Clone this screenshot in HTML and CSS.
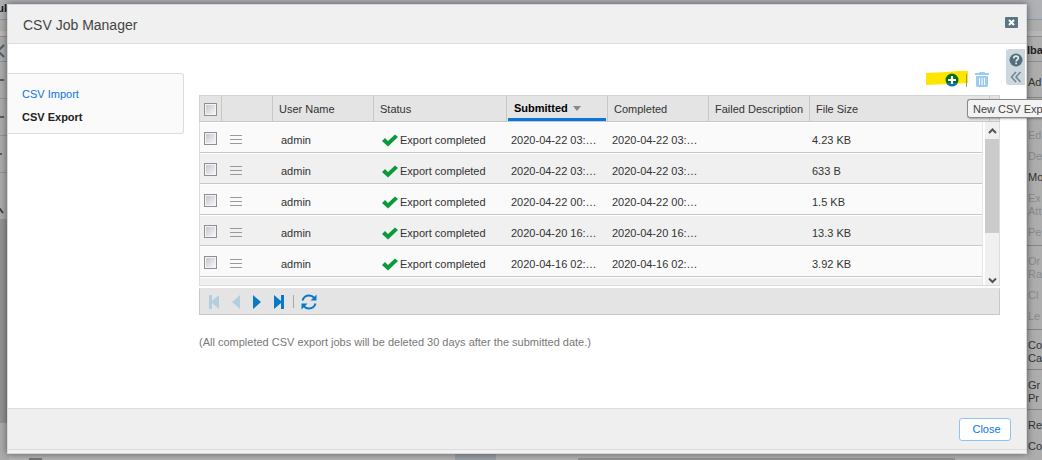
FILE: index.html
```html
<!DOCTYPE html>
<html lang="en">
<head>
<meta charset="utf-8">
<title>CSV Job Manager</title>
<link rel="stylesheet" href="styles.css">
</head>
<body>
<div class="page">
  <div class="rail">
    <div class="rail-top"><b>ul</b></div>
    <div class="rail-band"></div>
    <div class="rail-head"><svg width="8" height="14" viewBox="0 0 8 14"><path d="M4 1L-2 7l6 6" class="rail-stroke"/></svg></div>
    <div class="rail-row"><i></i></div>
    <div class="rail-row"><i></i></div>
    <div class="rail-row short"><i></i></div>
    <div class="rail-end"><svg width="8" height="6" viewBox="0 0 8 6"><path d="M-2 5L0 1l3 4" class="rail-arrow"/></svg></div>
    <div class="rail-thumb"></div>
  </div>
  <div class="under"><span class="under-box"></span><span class="under-tab"></span><span class="under-bar"></span></div>
  <div class="tools">
    <div class="tools-top"></div>
    <div class="tools-band"></div>
    <div class="tools-title">lba</div>
    <div class="tools-add">Ad</div>
    <div class="group first"><span class="off">Ed</span><span class="off">De</span><span>Mo</span><span class="off">Ex<br>Att</span><span class="off">Pe</span></div>
    <div class="group roomy"><span class="off">Or<br>Ra</span><span class="off">Cl</span><span class="off">Le</span></div>
    <div class="group"><span>Co<br>Ca</span></div>
    <div class="group"><span>Gr<br>Pr</span></div>
    <div class="group"><span>Re</span><span>Co</span></div>
  </div>
</div>

<section class="dialog" role="dialog" aria-labelledby="dialog-title">
  <header class="dialog-head">
    <h1 id="dialog-title">CSV Job Manager</h1>
    <button class="icon-button" type="button" aria-label="Close window">
      <svg width="13" height="11" viewBox="0 0 13 11"><rect width="13" height="11" rx="1" fill="#5b7583"/><path d="M4 3l5 5M9 3L4 8" stroke="#fff" stroke-width="2"/></svg>
    </button>
  </header>

  <div class="dialog-body">
    <nav class="side">
      <a href="#import">CSV Import</a>
      <a href="#export" class="current" aria-current="page">CSV Export</a>
    </nav>
    <main class="main">
      <div class="toolbar">
        <button class="icon-button" type="button" aria-label="New CSV Export">
          <svg width="42" height="18" viewBox="0 0 42 18"><path d="M0 3L20 2 32 1h10v12L25 14l-25 1z" fill="#ffe600"/><circle cx="26" cy="10" r="6.5" fill="#087018"/><path d="M20.500 13a6.500 6.500 0 0 0 11 0z" fill="#0b6fdc"/><path d="M26 6v8M22 10h8" stroke="#fff" stroke-width="2.200"/><path d="M40.500 4v13" stroke="#a49b50"/></svg>
        </button>
        <button class="icon-button" type="button" aria-label="Delete">
          <svg width="14" height="18" viewBox="0 0 14 18"><path d="M4.500 3V2.500h5V3" fill="none" stroke="#9ccbf3"/><path d="M0 3h14v2H0zM1 6h12v10l-1 1H2l-1-1z" fill="#9ccbf3"/><path d="M4.500 8v7M7 8v7M9.500 8v7" stroke="#fff"/></svg>
        </button>
      </div>

      <div class="grid">
        <table class="jobs jobs-head">
          <colgroup><col class="c-check"><col class="c-menu"><col class="c-std"><col class="c-status"><col class="c-std"><col class="c-std"><col class="c-std"><col><col class="c-end"></colgroup>
          <thead><tr>
            <th class="pick"><input type="checkbox" aria-label="Select all"></th><th></th><th>User Name</th><th>Status</th>
            <th class="sorted" aria-sort="descending"><div>Submitted<svg width="8" height="5" viewBox="0 0 8 5"><path d="M0 0h8L4 5z" fill="#888"/></svg></div></th>
            <th>Completed</th><th>Failed Description</th><th>File Size</th><th></th>
          </tr></thead>
        </table>
        <div class="scroller">
          <div class="rows">
            <table class="jobs jobs-body">
              <colgroup><col class="c-check"><col class="c-menu"><col class="c-std"><col class="c-status"><col class="c-std"><col class="c-std"><col class="c-std"><col></colgroup>
              <tbody id="jobs"></tbody>
            </table>
          </div>
          <div class="scrollbar">
            <svg width="14" height="17" viewBox="0 0 14 17"><path d="M4 11l3.500-3.500L11 11" class="arrow"/></svg>
            <div class="thumb"></div>
            <svg width="14" height="9" viewBox="0 0 14 9"><path d="M4 2.500L7.500 6 11 2.500" class="arrow"/></svg>
          </div>
        </div>
      </div>

      <div class="pager">
        <button class="icon-button" type="button" aria-label="First page" disabled><svg width="12" height="14" viewBox="0 0 12 14"><path d="M1 0h3v6l7-6v14L4 8v6H1z" fill="#b3cfdf"/></svg></button>
        <button class="icon-button" type="button" aria-label="Previous page" disabled><svg width="10" height="14" viewBox="0 0 10 14"><path d="M9 0v14L1 7z" fill="#b3cfdf"/></svg></button>
        <button class="icon-button" type="button" aria-label="Next page"><svg width="10" height="14" viewBox="0 0 10 14"><path d="M1 0l8 7-8 7z" fill="#0878c8"/></svg></button>
        <button class="icon-button" type="button" aria-label="Last page"><svg width="12" height="14" viewBox="0 0 12 14"><path d="M1 0l7 6V0h3v14H8V8l-7 6z" fill="#0878c8"/></svg></button>
        <span class="pager-line"></span>
        <button class="icon-button" type="button" aria-label="Refresh"><svg width="16" height="16" viewBox="0 0 16 16"><path d="M1.500 6.500C2.500 3.200 5 1.500 8 1.500c2.300 0 4 .9 5.500 2.700M14.500 9.500c-1 3.300-3.500 5-6.500 5-2.300 0-4-.9-5.500-2.700" fill="none" stroke="#0878c8" stroke-width="2"/><path d="M15.500.5v6h-6zM.5 15.500v-6h6z" fill="#0878c8"/></svg></button>
      </div>
      <p class="note">(All completed CSV export jobs will be deleted 30 days after the submitted date.)</p>
    </main>
  </div>

  <footer class="dialog-foot"><button class="close" type="button">Close</button></footer>

  <div class="help">
    <button class="icon-button" type="button" aria-label="Help"><svg width="14" height="14" viewBox="0 0 14 14"><circle cx="7" cy="7" r="6.500" fill="#536f7e"/><path d="M4.800 5.500C4.800 4 5.800 3.200 7 3.200s2.300.8 2.300 2c0 1.500-2.200 1.600-2.200 3.300M7.100 9.500v1.800" fill="none" stroke="#e3eaee" stroke-width="1.700"/></svg></button>
    <button class="icon-button" type="button" aria-label="Expand help"><svg width="12" height="12" viewBox="0 0 12 12"><path d="M6 1L1.500 6 6 11M10.500 1L6 6l4.500 5" fill="none" stroke="#6d8592" stroke-width="1.500"/></svg></button>
  </div>
</section>
<div class="tooltip" role="tooltip">New CSV Exp</div>
<script src="jobs.js"></script>
</body>
</html>
```
FILE: jobs.js
```js
const jobs = [
  ["2020-04-22 03:…", "2020-04-22 03:…", "4.23 KB"],
  ["2020-04-22 03:…", "2020-04-22 03:…", "633 B"],
  ["2020-04-22 00:…", "2020-04-22 00:…", "1.5 KB"],
  ["2020-04-20 16:…", "2020-04-20 16:…", "13.3 KB"],
  ["2020-04-16 02:…", "2020-04-16 02:…", "3.92 KB"]
];
const tick = '<svg width="16" height="14" viewBox="0 0 16 14"><path d="M0 7l3-3 3 3 7-6.500L16 3 6 12.500z" fill="#0a9a3c"/></svg>';
const menu = '<button class="icon-button" type="button" aria-label="Row menu"><svg width="12" height="10" viewBox="0 0 12 10"><path d="M0 .5h12M0 4.500h12M0 8.500h12" stroke="#999"/></svg></button>';
document.getElementById("jobs").innerHTML = jobs.map(([submitted, completed, size]) =>
  `<tr><td class="pick"><input type="checkbox" aria-label="Select job"></td><td class="pick">${menu}</td><td class="wide">admin</td><td class="wide"><span class="status">${tick}Export completed</span></td><td>${submitted}</td><td>${completed}</td><td></td><td class="size">${size}</td></tr>`
).join("") + '<tr><td colspan="8"></td></tr>';
```
FILE: styles.css
```css
* { box-sizing: border-box; }
body { margin: 0; height: 100vh; overflow: hidden; position: relative; font: 11px/13px "Liberation Sans", Arial, sans-serif; color: #333; background: #aeb0b4; }
button, input { font: inherit; margin: 0; }
svg { display: block; }
.icon-button { display: block; border: 0; padding: 0; background: none; }

.page { height: 100%; display: grid; grid-template-columns: 9px 1fr 15px; overflow: hidden; }
.rail { display: flex; flex-direction: column; overflow: hidden; background: #ababab; }
.rail-top { height: 20px; display: flex; justify-content: flex-end; padding: 2px 2px 0 0; border-bottom: 1px solid #8199ab; color: #222; background: #aeb0b4; }
.rail-band { height: 16px; border-bottom: 5px solid #b7b7b7; }
.rail-head { height: 26px; padding-top: 7px; border-top: 1px solid #8e8e8e; border-bottom: 1px solid #8e8e8e; }
.rail-stroke { fill: none; stroke: #4c626e; stroke-width: 2; }
.rail-arrow { fill: none; stroke: #444; stroke-width: 2; }
.rail-row { height: 37px; border-bottom: 1px solid #939393; display: flex; align-items: center; }
.rail-row i { width: 4px; height: 2px; background: #4c626e; }
.rail-row.short i { width: 2px; }
.rail-end { height: 46px; padding-top: 35px; }
.rail-thumb { height: 204px; background: #929292; }

.under { align-self: end; height: 6px; display: flex; background: #b3b3b3; }
.under-box { width: 13px; height: 2px; margin: 4px 0 0 20px; background: #777; }
.under-tab { width: 41px; margin-left: 413px; background: #9aa0a8; }
.under-bar { flex: 1; height: 2px; margin: 4px 72px 0 82px; background: #929292; }

.tools { display: flex; flex-direction: column; overflow: hidden; background: #adadad; }
.tools > div { flex: none; padding-left: 1px; white-space: nowrap; }
.tools-top { height: 20px; background: #afb1b5; border-bottom: 1px solid #7f9db5; }
.tools-band { height: 16px; border-bottom: 5px solid #b7b7b7; }
.tools > .tools-title { height: 26px; padding: 7px 0 0; border: solid #909090; border-width: 1px 0; font-weight: bold; color: #222; }
.tools-add { height: 35px; padding-top: 14px; }
.group { display: flex; flex-direction: column; gap: 8px; padding: 9px 0 4px; border-top: 1px solid #858585; }
.group.first { padding-top: 31px; padding-bottom: 6px; }
.group.roomy { padding-bottom: 6px; }
.off { color: #8a8a8a; }

.dialog { position: absolute; inset: 4px 15px 6px 7px; display: flex; flex-direction: column; padding-bottom: 3px; background: #f1f1f1; border: 1px solid #d8d8d8; box-shadow: 0 0 7px rgba(0,0,0,.5); }
.dialog-head { height: 39px; flex: none; display: flex; justify-content: space-between; align-items: flex-start; padding: 12px 8px 0 15px; background: #f0f0f0; border-bottom: 1px solid #dcdcdc; }
.dialog-head h1 { margin: 0; font-size: 14px; line-height: 16px; font-weight: normal; color: #444; }
.dialog-body { flex: 1; display: flex; align-items: flex-start; background: #fff; }
.side { width: 176px; flex: none; margin-top: 29px; padding: 14px 14px 9px; display: flex; flex-direction: column; gap: 10px; background: #fafafa; border: 1px solid #dcdcdc; border-left: 0; border-radius: 0 3px 3px 0; }
.side a { color: #0b74e5; text-decoration: none; }
.side a.current { color: #222; font-weight: bold; }
.main { flex: 1; min-width: 0; padding: 26px 26px 0 15px; }
.toolbar { display: flex; justify-content: flex-end; gap: 7px; padding-right: 11px; margin-bottom: 7px; }

.jobs { width: 100%; table-layout: fixed; border-collapse: separate; border-spacing: 0; }
.jobs th, .jobs td { padding: 0 0 0 4px; text-align: left; white-space: nowrap; overflow: hidden; }
.c-check { width: 22px; }
.c-menu { width: 51px; }
.c-std { width: 101px; }
.c-status { width: 133px; }
.c-end { width: 9px; }
.jobs-head { background: #e4e4e4; border: 1px solid #d2d2d2; border-bottom-color: #c8c8c8; }
.jobs-head th { height: 25px; padding-top: 1px; padding-left: 6px; border-right: 1px solid #c8c8c8; font-weight: normal; }
.jobs-head th:last-child { border-right: 0; }
.jobs th.pick { padding-left: 4px; }
.jobs th.sorted { padding: 0 1px; font-weight: bold; color: #000; }
.sorted div { height: 25px; display: flex; align-items: center; gap: 5px; padding: 2px 0 0 6px; border-bottom: 3px solid #0b74e5; }
.scroller { display: flex; height: 164px; border: 1px solid #dcdcdc; border-top: 0; }
.rows { flex: 1; min-width: 0; overflow: hidden; border-right: 1px solid #e8e8e8; }
.jobs-body td { height: 31px; padding-top: 6px; border-top: 1px solid #fff; border-bottom: 1px solid #c8c8c8; background: #fafafa; }
.jobs-body tr:nth-child(even) td { background: #f0f0f0; }
.jobs td.wide { padding-left: 8px; }
.jobs td.size { padding-left: 2px; }
.jobs-body td.pick { padding-top: 1px; }
.jobs-body td.pick + td.pick { padding: 4px 0 0 8px; }
.status { display: flex; align-items: center; gap: 2px; }
.pick input { appearance: none; display: block; width: 13px; height: 13px; border: 1px solid #8e8f8f; padding: 1px; background: linear-gradient(135deg, #c4c8d0, #f6f6f6) content-box, #f4f4f4; }
.scrollbar { width: 14px; margin-left: 2px; display: flex; flex-direction: column; background: #f0f0f0; }
.arrow { fill: none; stroke: #555; stroke-width: 2; }
.thumb { height: 94px; margin-bottom: auto; background: #cbcbcb; }

.pager { height: 27px; margin-top: 2px; display: flex; align-items: center; gap: 11px; padding-left: 8px; background: #e4e4e4; border: 1px solid #c8c8c8; border-top-color: #e4e4e4; }
.pager-line { width: 1px; height: 13px; margin-right: -4px; margin-left: -3px; background: #a8a8a8; }
.note { margin: 21px 0 0; color: #777; }

.dialog-foot { height: 42px; flex: none; display: flex; justify-content: flex-end; align-items: flex-start; padding: 9px 15px 0; background: #efefef; border-top: 1px solid #dcdcdc; border-bottom: 1px solid #dcdcdc; }
.close { width: 52px; height: 23px; padding: 0 0 0 3px; border: 1px solid #8fc3f5; border-radius: 3px; background: #fff; color: #0b74e5; }

.help { position: absolute; top: 44px; right: 1px; width: 19px; height: 36px; display: flex; flex-direction: column; align-items: center; gap: 4px; padding-top: 4px; border-radius: 3px 0 0 3px; background: #cdd7dd; }
.tooltip { position: absolute; top: 99px; left: calc(100% - 75px); right: 0; height: 19px; padding: 2px 0 0 5px; overflow: hidden; white-space: nowrap; font-size: 11px; line-height: 14px; color: #444; background: #f3f3f3; border: 1px solid #8a8a8a; border-right: 0; border-radius: 3px 0 0 3px; box-shadow: 1px 1px 2px rgba(0,0,0,.3); }
```
